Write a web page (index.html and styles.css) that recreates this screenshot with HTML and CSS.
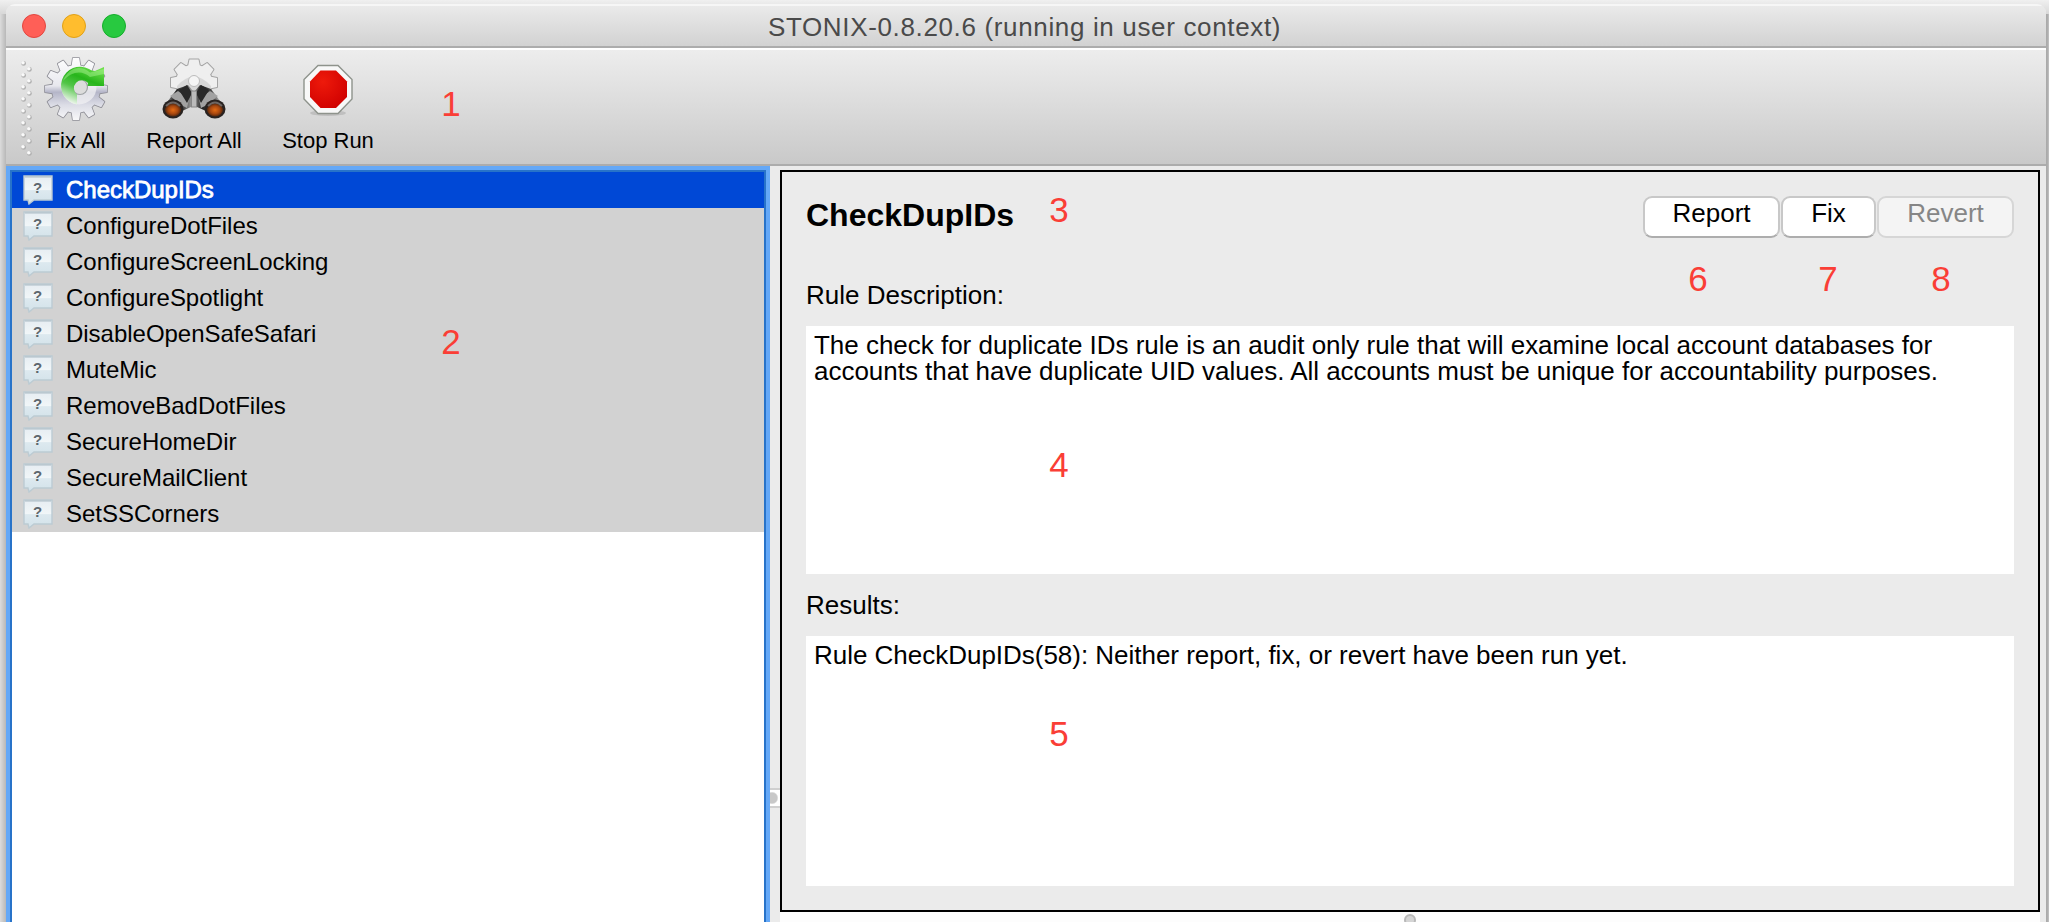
FILE: index.html
```html
<!DOCTYPE html>
<html lang="en">
<head>
<meta charset="utf-8">
<title>STONIX-0.8.20.6 (running in user context)</title>
<link rel="stylesheet" href="styles.css">
</head>
<body>
<svg class="defs" width="0" height="0" aria-hidden="true">
  <defs>
    <linearGradient id="bubbleFill" x1="0" y1="0" x2="0" y2="1"><stop offset="0" stop-color="#e6edf2"/><stop offset=".5" stop-color="#f1f6f8"/><stop offset=".52" stop-color="#dde9ef"/><stop offset="1" stop-color="#d2e2e9"/></linearGradient>
    <linearGradient id="gearFill" x1="0" y1="0" x2="0" y2="1"><stop offset="0" stop-color="#fff"/><stop offset=".45" stop-color="#e8e8ee"/><stop offset=".55" stop-color="#b4b5c8"/><stop offset=".75" stop-color="#dcdde6"/><stop offset="1" stop-color="#fafafa"/></linearGradient>
    <linearGradient id="arrowFill" gradientUnits="userSpaceOnUse" x1="46" y1="8" x2="30" y2="47"><stop offset="0" stop-color="#6ee04c"/><stop offset=".35" stop-color="#27b51b"/><stop offset=".62" stop-color="#52c548"/><stop offset="1" stop-color="#eef6ec"/></linearGradient>
    <radialGradient id="lens"><stop offset="0" stop-color="#e36b14"/><stop offset=".6" stop-color="#a9480f"/><stop offset="1" stop-color="#54280f"/></radialGradient>
    <linearGradient id="barrel" x1="0" y1="0" x2="1" y2="0"><stop offset="0" stop-color="#777"/><stop offset=".3" stop-color="#242424"/><stop offset=".65" stop-color="#4b4b4b"/><stop offset="1" stop-color="#aaa"/></linearGradient>
    <radialGradient id="stopFill" cx=".35" cy=".3" r=".8"><stop offset="0" stop-color="#ee1a0b"/><stop offset="1" stop-color="#cf0000"/></radialGradient>
    <symbol id="bubble" viewBox="0 0 30 30">
      <path d="M1 1H29V25H11L6 29L5 25H1Z" fill="url(#bubbleFill)" stroke="#bccbd3" stroke-width="1.4"/>
      <path d="M2 2H28" stroke="#aebcc5" stroke-width="1"/>
      <text x="14.6" y="17.5" text-anchor="middle" class="bubble-mark">?</text>
    </symbol>
    <path id="tooth12" d="M-4.6 -22L-3.2 -31H3.2L4.6 -22Z" stroke-linejoin="round"/>
    <g id="teeth12">
      <use href="#tooth12"/><use href="#tooth12" transform="rotate(30)"/><use href="#tooth12" transform="rotate(60)"/><use href="#tooth12" transform="rotate(90)"/><use href="#tooth12" transform="rotate(120)"/><use href="#tooth12" transform="rotate(150)"/><use href="#tooth12" transform="rotate(180)"/><use href="#tooth12" transform="rotate(210)"/><use href="#tooth12" transform="rotate(240)"/><use href="#tooth12" transform="rotate(270)"/><use href="#tooth12" transform="rotate(300)"/><use href="#tooth12" transform="rotate(330)"/><circle r="24"/>
    </g>
    <path id="tooth8" d="M-6 -16L-4.5 -23H4.500L6 -16Z" stroke-linejoin="round"/>
    <g id="teeth8">
      <use href="#tooth8"/><use href="#tooth8" transform="rotate(45)"/><use href="#tooth8" transform="rotate(90)"/><use href="#tooth8" transform="rotate(270)"/><use href="#tooth8" transform="rotate(315)"/><circle r="18"/>
    </g>
    <clipPath id="gearClip"><use href="#tooth12" transform="translate(32 32)"/><use href="#tooth12" transform="translate(32 32) rotate(30)"/><use href="#tooth12" transform="translate(32 32) rotate(60)"/><use href="#tooth12" transform="translate(32 32) rotate(90)"/><use href="#tooth12" transform="translate(32 32) rotate(120)"/><use href="#tooth12" transform="translate(32 32) rotate(150)"/><use href="#tooth12" transform="translate(32 32) rotate(180)"/><use href="#tooth12" transform="translate(32 32) rotate(210)"/><use href="#tooth12" transform="translate(32 32) rotate(240)"/><use href="#tooth12" transform="translate(32 32) rotate(270)"/><use href="#tooth12" transform="translate(32 32) rotate(300)"/><use href="#tooth12" transform="translate(32 32) rotate(330)"/><circle cx="32" cy="32" r="24"/></clipPath>
    <pattern id="gripDots" width="12" height="12" patternUnits="userSpaceOnUse"><circle cx="3.6" cy="3.4" r="2.400" fill="#b0b0b0"/><circle cx="3" cy="2.8" r="1.8" fill="#fafafa"/><circle cx="9.4" cy="9.4" r="2.400" fill="#b0b0b0"/><circle cx="8.8" cy="8.8" r="1.8" fill="#fafafa"/></pattern>
  </defs>
</svg>

<div class="window">
  <header class="titlebar">
    <div class="lights"><span class="light close"></span><span class="light minimize"></span><span class="light maximize"></span></div>
    <h1 class="title">STONIX-0.8.20.6 (running in user context)</h1>
  </header>

  <nav class="toolbar">
    <svg class="grip" width="12" height="96"><rect width="12" height="96" fill="url(#gripDots)"/></svg>
    <div class="tool fix-tool">
      <svg width="64" height="64" viewBox="0 0 64 64">
        <use href="#teeth12" transform="translate(32 32)" fill="none" stroke="#8e8e96" stroke-width="1.6"/>
        <rect width="64" height="64" fill="url(#gearFill)" clip-path="url(#gearClip)"/>
        <circle cx="35" cy="30" r="12.500" fill="none" stroke="#f0f0f3" stroke-width="10" opacity=".75"/>
        <circle cx="36" cy="30" r="7.500" fill="#dcdcdc" stroke="#9fa3a6" stroke-width="1.2"/>
        <path d="M33 47.500A19 19 0 1 1 45 12Q47.500 14 51 14L60 10V29H43.500L44 26A8 8 0 1 0 33 37.500Z" fill="url(#arrowFill)"/>
        <path d="M19 24C24 11 36 7 46 15.500L60 12V17L46 20C38 13 28 14 19 24Z" fill="#b0f59a" opacity=".45"/>
      </svg>
      <span>Fix All</span>
    </div>
    <div class="tool report-tool">
      <svg width="64" height="64" viewBox="0 0 64 64">
        <use href="#teeth8" transform="translate(32 25.500)" fill="none" stroke="#a4a4a4" stroke-width="2"/>
        <use href="#teeth8" transform="translate(32 25.500)" fill="#efefef"/>
        <path d="M15 29Q32 10 49 29V34H15Z" fill="#d8d8d8"/>
        <path d="M15 32L26 28L31 34L29 50L20 54L6 44Z" fill="url(#barrel)"/>
        <path d="M49 32L38 28L33 34L35 50L44 54L58 44Z" fill="url(#barrel)"/>
        <path d="M8 39L16 34L27 42L25 51L19 48Z" fill="#a2a2a2"/>
        <path d="M56 39L48 34L37 42L39 51L45 48Z" fill="#a2a2a2"/>
        <path d="M17 33L25 28L30 36L25 46Z M47 33L39 28L34 36L39 46Z" fill="#292929"/>
        <rect x="29.5" y="34" width="5" height="16" fill="#bbb" stroke="#888"/>
        <circle cx="32" cy="24" r="5.500" fill="#f5f5f5" stroke="#bcbcbc"/>
        <ellipse cx="11" cy="52" rx="10.5" ry="9.5" fill="#292321"/><ellipse cx="11" cy="53" rx="8" ry="6.5" fill="url(#lens)"/>
        <ellipse cx="53" cy="52" rx="10.5" ry="9.5" fill="#292321"/><ellipse cx="53" cy="53" rx="8" ry="6.5" fill="url(#lens)"/>
        <path d="M4 49Q11 42 18 49 M46 49Q53 42 60 49" fill="none" stroke="#6e6663" stroke-width="2"/>
      </svg>
      <span>Report All</span>
    </div>
    <div class="tool stop-tool">
      <svg width="64" height="64" viewBox="0 0 64 64">
        <ellipse cx="32" cy="56" rx="18" ry="3" fill="#999" opacity=".4"/>
        <path d="M22 8.500H42L56 22.500V42L42 56.500H22L8 42V22.500Z" fill="#f8f8f8" stroke="#8e938c" stroke-width="1.4"/>
        <path d="M24.500 13.500H40L51 24.500V40L40 51H24.500L14 40V24.500Z" fill="url(#stopFill)"/>
      </svg>
      <span>Stop Run</span>
    </div>
  </nav>

  <main class="content">
    <ul class="rules">
      <li class="rule selected"><svg class="bubble"><use href="#bubble"/></svg>CheckDupIDs</li>
      <li class="rule"><svg class="bubble"><use href="#bubble"/></svg>ConfigureDotFiles</li>
      <li class="rule"><svg class="bubble"><use href="#bubble"/></svg>ConfigureScreenLocking</li>
      <li class="rule"><svg class="bubble"><use href="#bubble"/></svg>ConfigureSpotlight</li>
      <li class="rule"><svg class="bubble"><use href="#bubble"/></svg>DisableOpenSafeSafari</li>
      <li class="rule"><svg class="bubble"><use href="#bubble"/></svg>MuteMic</li>
      <li class="rule"><svg class="bubble"><use href="#bubble"/></svg>RemoveBadDotFiles</li>
      <li class="rule"><svg class="bubble"><use href="#bubble"/></svg>SecureHomeDir</li>
      <li class="rule"><svg class="bubble"><use href="#bubble"/></svg>SecureMailClient</li>
      <li class="rule"><svg class="bubble"><use href="#bubble"/></svg>SetSSCorners</li>
    </ul>
    <div class="splitter"><span class="knob"></span></div>
    <div class="detail">
      <section class="panel">
        <div class="panel-head">
          <h2>CheckDupIDs</h2>
          <div class="buttons">
            <button class="btn report">Report</button>
            <button class="btn fix">Fix</button>
            <button class="btn revert" disabled>Revert</button>
          </div>
        </div>
        <h3>Rule Description:</h3>
        <div class="box description">The check for duplicate IDs rule is an audit only rule that will examine local account databases for<br>accounts that have duplicate UID values. All accounts must be unique for accountability purposes.</div>
        <h3>Results:</h3>
        <div class="box results">Rule CheckDupIDs(58): Neither report, fix, or revert have been run yet.</div>
      </section>
      <div class="lower"><span class="lower-knob"></span></div>
    </div>
  </main>
</div>

<span class="note n1">1</span>
<span class="note n2">2</span>
<span class="note n3">3</span>
<span class="note n4">4</span>
<span class="note n5">5</span>
<span class="note n6">6</span>
<span class="note n7">7</span>
<span class="note n8">8</span>
</body>
</html>
```

FILE: styles.css
```css
* { box-sizing: border-box; margin: 0; padding: 0; }
body {
  width: 2049px; height: 922px; overflow: hidden; position: relative;
  padding: 4px 3px 0 6px;
  background: linear-gradient(90deg, #dcdcdc 0, #b8b8b8 6px, #b8b8b8 2044px, #a8a8a8 2047px, #c4c4c4 2049px);
  font-family: "Liberation Sans", Arial, sans-serif; color: #000;
}
body::before { content: ""; position: absolute; z-index: -1; left: 0; top: 0; width: 2049px; height: 14px; background: linear-gradient(#f0f0f0, #d8d8d8); }
.defs { position: absolute; }
.window { display: flex; flex-direction: column; height: 918px; border-radius: 9px 9px 0 0; overflow: hidden; background: #ebebeb; }

.titlebar { display: flex; align-items: center; justify-content: center; position: relative; height: 44px; flex: none; padding: 1px 3px 0 0; border-top: 2px solid #f6f6f6; border-bottom: 2px solid #acacac; background: linear-gradient(#eaeaea, #d2d2d2); }
.lights { position: absolute; left: 16px; top: 8px; display: flex; gap: 16px; }
.light { width: 24px; height: 24px; border-radius: 50%; border: 1px solid; }
.close { background: #ff5f57; border-color: #e2463f; }
.minimize { background: #ffbd2e; border-color: #e1a116; }
.maximize { background: #28c940; border-color: #14ae2a; }
.title { font-size: 26px; font-weight: normal; line-height: 30px; letter-spacing: .65px; color: #4a4a4a; }

.toolbar { display: flex; height: 118px; flex: none; border-top: 2px solid #fff; border-bottom: 2px solid #acacac; background: linear-gradient(#ededed, #c9c9c9); padding: 7px 0 0 14px; }
.grip { margin-top: 3px; flex: none; }
.tool { display: flex; flex-direction: column; align-items: center; font-size: 22px; line-height: 26px; gap: 7px; white-space: nowrap; }
.tool svg { flex: none; }
.fix-tool { width: 80px; margin-left: 4px; }
.report-tool { width: 110px; margin-left: 23px; }
.stop-tool { width: 110px; margin-left: 24px; }

.content { display: flex; flex: 1; min-height: 0; }
.rules { width: 764px; list-style: none; background: #fff; border: 4px solid #64a8f7; border-bottom: 0; box-shadow: inset 2px 0 #2873c9, inset -2px 0 #2873c9, inset 0 2px #2873c9; padding: 2px 2px 0; }
.rule { display: flex; align-items: center; height: 36px; padding-left: 11px; font-size: 24px; letter-spacing: -.02px; background: #d2d2d2; white-space: nowrap; }
.bubble { width: 30px; height: 30px; margin-right: 13px; flex: none; }
.bubble-mark { font: bold 15px "Liberation Sans", sans-serif; fill: #5e676d; }
.selected { background: #0048d6; color: #fff; -webkit-text-stroke: .8px #fff; }
.selected .bubble { -webkit-text-stroke: 0; }
.splitter { width: 10px; padding-top: 622px; background: #ebebeb; }
.knob { display: block; width: 10px; height: 20px; border: solid #cfcfcf; border-width: 2px 0; background: radial-gradient(circle at 2px 8px, #c8c8c8 0 5px, #fff 6.500px); }
.detail { width: 1260px; display: flex; flex-direction: column; padding-top: 4px; }
.panel { height: 742px; flex: none; border: 2px solid #000; padding: 24px 24px; display: flex; flex-direction: column; }
.panel-head { display: flex; justify-content: space-between; height: 84px; }
.panel h2 { font-size: 32px; line-height: 38px; }
.buttons { display: flex; gap: 1px; height: 42px; }
.btn { font: 26px/30px "Liberation Sans", Arial, sans-serif; color: #000; background: #fff; border: 2px solid #c8c8c8; border-bottom-color: #adadad; border-radius: 9px; padding: 0 0 8px; height: 42px; }
.report { width: 137px; }
.fix { width: 95px; }
.revert { width: 137px; color: #868686; background: #f4f4f4; border-color: #d6d6d6; }
.panel h3 { font-size: 26px; font-weight: normal; line-height: 30px; height: 46px; }
.box { flex: none; background: #fff; padding: 6px 8px; font-size: 26px; line-height: 26px; letter-spacing: -.02px; white-space: nowrap; }
.description { height: 248px; margin-bottom: 16px; }
.results { height: 250px; }
.lower { flex: 1; background: #fdfdfd; padding: 2px 0 0 624px; overflow: hidden; }
.lower-knob { display: block; width: 12px; height: 12px; border-radius: 50%; background: #d5d5d5; border: 2px solid #b9b9b9; }

/* Callout numbers lie over the window. */
.note { position: absolute; width: 24px; margin-left: -12px; text-align: center; font-size: 35px; line-height: 36px; color: #fa3e36; }
.n1 { left: 451px; top: 86px; }
.n2 { left: 451px; top: 324px; }
.n3 { left: 1059px; top: 192px; }
.n4 { left: 1059px; top: 447px; }
.n5 { left: 1059px; top: 716px; }
.n6 { left: 1698px; top: 261px; }
.n7 { left: 1828px; top: 261px; }
.n8 { left: 1941px; top: 261px; }
```
